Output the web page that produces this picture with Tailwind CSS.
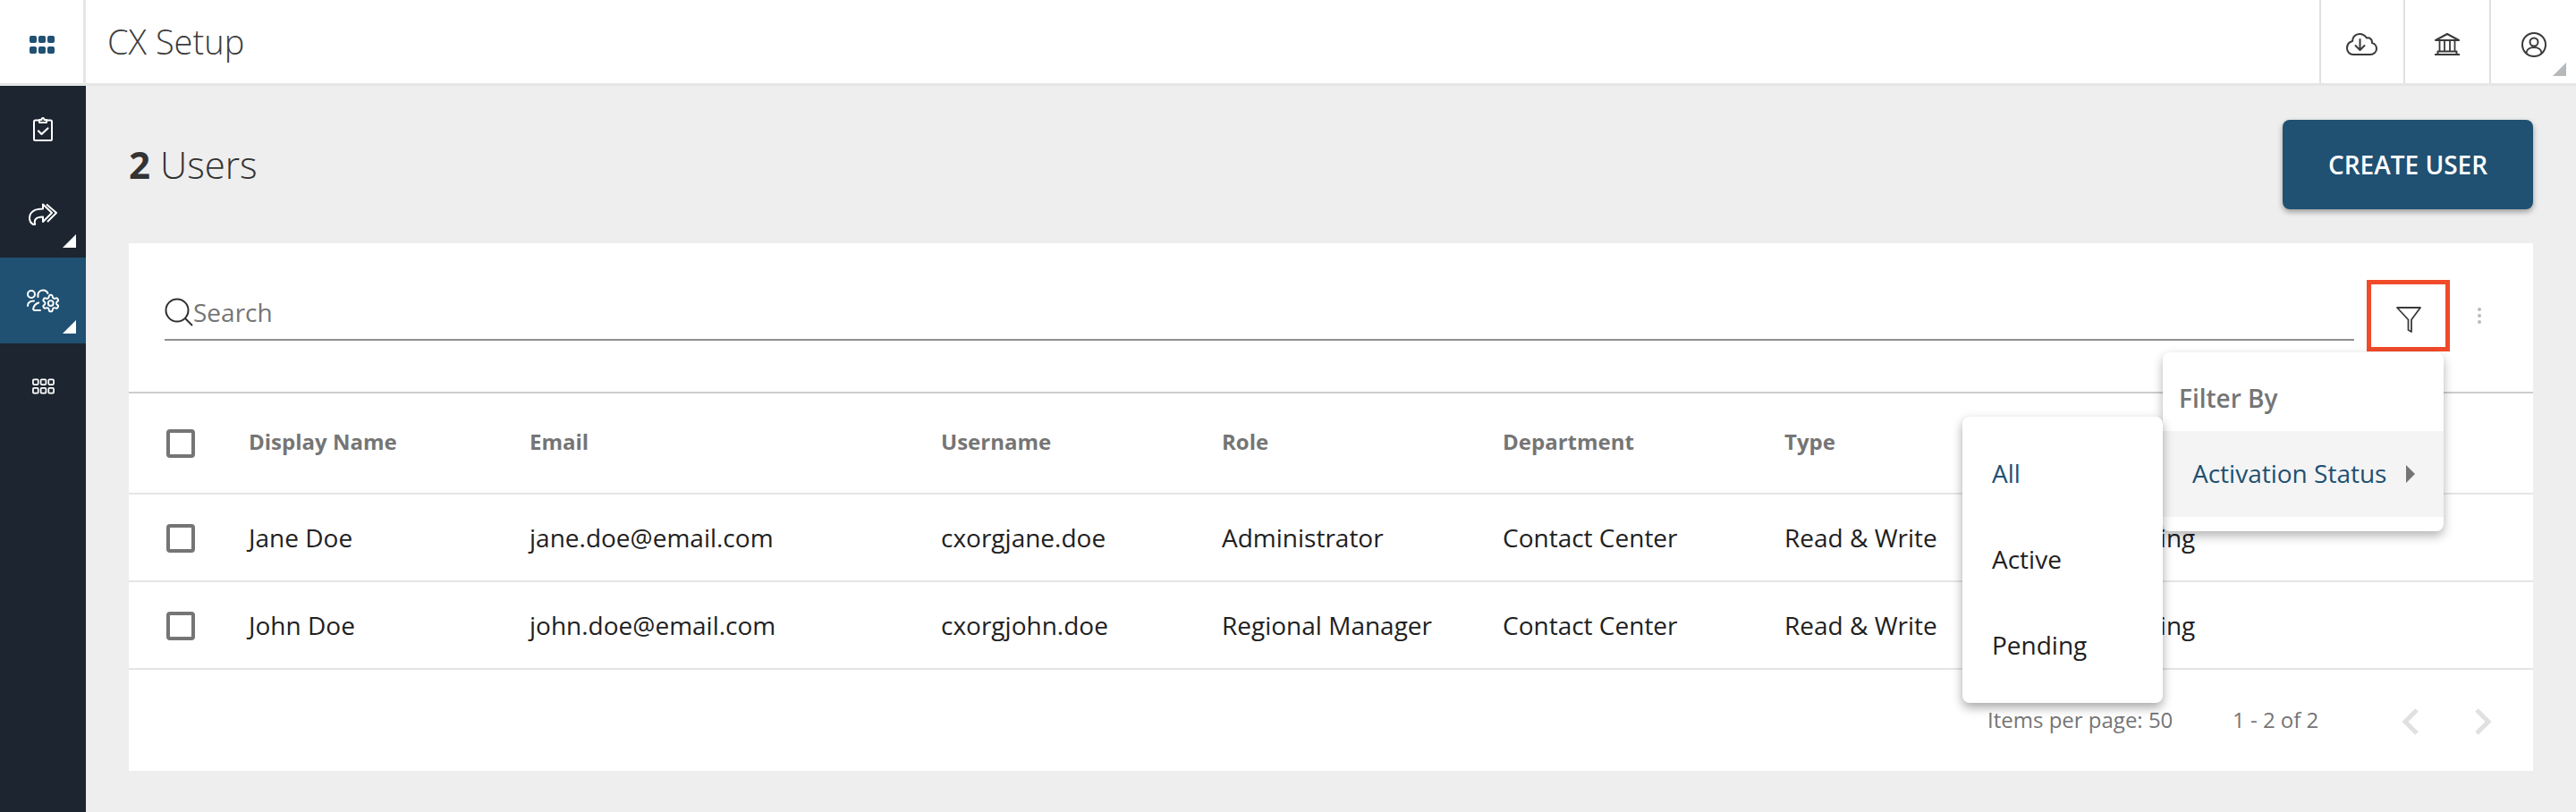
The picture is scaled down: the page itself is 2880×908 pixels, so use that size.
<!DOCTYPE html>
<html lang="en">
<head>
    <meta charset="UTF-8">
    <title>CX Setup</title>
    <script src="https://cdn.jsdelivr.net/npm/@tailwindcss/browser@4"></script>
</head>
<body class="h-[908px] w-[2880px] overflow-hidden bg-[#eeeeee] font-['Open_Sans',sans-serif] text-[#212121]">

    <!-- Top bar -->
    <header class="flex h-[96px] border-b-[3px] border-[#e6e6e6] bg-white">
        <div class="flex w-[96px] items-center justify-center border-r-[3px] border-[#e6e6e6]">
            <svg class="mt-[6px]" width="28" height="20" viewBox="0 0 28 20" fill="#205072">
                <rect x="0" y="0" width="8" height="8" rx="2"/><rect x="10" y="0" width="8" height="8" rx="2"/><rect x="20" y="0" width="8" height="8" rx="2"/>
                <rect x="0" y="12" width="8" height="8" rx="2"/><rect x="10" y="12" width="8" height="8" rx="2"/><rect x="20" y="12" width="8" height="8" rx="2"/>
            </svg>
        </div>
        <h1 class="pl-[24px] text-[38px] leading-[93px] font-light text-[#3c3c3c]">CX Setup</h1>
        <div class="ml-auto flex">
            <div class="flex w-[94px] items-center justify-center border-l-2 border-[#e0e0e0]">
                <svg class="mt-[6px] mr-[2px]" width="35" height="25" viewBox="0 0 35 25" fill="none" stroke="#3a3a3a" stroke-width="2" stroke-linecap="round" stroke-linejoin="round">
                    <path d="M8 24H27C31 24 34 21 34 17.500C34 14 31.500 11.500 29 11C29.500 7 26 4.500 23 5.500C21 2.500 18 1 15 1C10.500 1 7 4.500 7 9C3 10 1 13.500 1 17C1 21 4 24 8 24z"/>
                    <path d="M15.500 7V18.500M10.500 14l5 5 5-5"/>
                </svg>
            </div>
            <div class="flex w-[96px] items-center justify-center border-l-2 border-[#e0e0e0]">
                <svg class="mt-[6px]" width="28" height="25" viewBox="0 0 28 25" fill="none" stroke="#3a3a3a" stroke-width="2" stroke-linejoin="round">
                    <path d="M1 8 14 1l13 7z"/>
                    <path d="M5.500 9v11M11 9v11M17 9v11M22.500 9v11" stroke-width="1.800"/>
                    <path d="M3.500 24v-3.500h21V24"/>
                    <path d="M0 24h28"/>
                </svg>
            </div>
            <div class="relative flex w-[97px] items-center justify-center border-l-2 border-[#e0e0e0]">
                <svg class="mt-[6px]" width="28" height="28" viewBox="0 0 28 28" fill="none" stroke="#3a3a3a" stroke-width="2">
                    <circle cx="14" cy="14" r="13"/>
                    <circle cx="14" cy="11" r="4.500"/>
                    <path d="M5.500 23.500c0-4 3.500-6.500 8.500-6.500s8.500 2.500 8.500 6.500"/>
                </svg>
                <svg class="absolute right-[11px] bottom-[8px]" width="15" height="15" viewBox="0 0 15 15" fill="#b5b9bc"><path d="M15 0v15H0z"/></svg>
            </div>
        </div>
    </header>

    <div class="flex h-[812px]">
        <!-- Side nav -->
        <nav class="w-[96px] shrink-0 bg-[#1c2530]">
            <div class="flex h-[96px] items-center justify-center">
                <svg width="22" height="28" viewBox="0 0 22 28" fill="none" stroke="#fff" stroke-width="2" stroke-linecap="round" stroke-linejoin="round">
                    <path d="M7 4.500H2.500a1.500 1.500 0 0 0-1.500 1.500v19.500A1.500 1.500 0 0 0 2.500 27h17a1.500 1.500 0 0 0 1.500-1.500V6a1.500 1.500 0 0 0-1.500-1.500H15"/>
                    <path d="M7 7V4h2.500a1.500 2 0 0 1 3 0H15v3z"/>
                    <path d="M6 16.500l3.500 3.500 7-6.500" stroke-width="2.200"/>
                </svg>
            </div>
            <div class="relative flex h-[96px] items-center justify-center">
                <svg class="mb-[2px]" width="32" height="25" viewBox="0 0 32 25" fill="none" stroke="#fff" stroke-width="2" stroke-linejoin="round">
                    <path d="M16 1.500V6.500C7 6.500 1 10 1 17C1 20.500 3 23 6 24.500C6.500 24.500 7.500 24 7 23C6 19 8 15.500 16 15.500V21L26 11z"/>
                    <path d="M20 1.500 31 11 21 21"/>
                </svg>
                <svg class="absolute right-[11px] bottom-[11px]" width="15" height="15" viewBox="0 0 15 15" fill="#fff"><path d="M15 0v15H0z"/></svg>
            </div>
            <div class="relative flex h-[96px] items-center justify-center bg-[#205072]">
                <svg class="mt-[4px] ml-[2px]" width="40" height="30" viewBox="29 323 40 30" fill="none" stroke="#fff" stroke-width="2" stroke-linecap="round" stroke-linejoin="round">
                    <circle cx="35" cy="329" r="4"/>
                    <path d="M31 342c0-3.500 2.500-5.500 7-5.500"/>
                    <path d="M42.500 332c-1-4 1.500-7.500 5.500-7.500 2.500 0 4.500 1.200 5.500 3.500"/>
                    <path d="M45 347h-6c-1.500 0-2-1-1.800-2 .6-3 2.800-5.500 6-6.500"/>
                    <g transform="translate(45.700 328) scale(.92)">
                        <path d="M12.220 2h-.44a2 2 0 0 0-2 2v.18a2 2 0 0 1-1 1.730l-.43.25a2 2 0 0 1-2 0l-.15-.08a2 2 0 0 0-2.730.73l-.22.38a2 2 0 0 0 .73 2.730l.15.1a2 2 0 0 1 1 1.720v.51a2 2 0 0 1-1 1.740l-.15.09a2 2 0 0 0-.73 2.730l.22.38a2 2 0 0 0 2.730.73l.15-.08a2 2 0 0 1 2 0l.43.25a2 2 0 0 1 1 1.730V20a2 2 0 0 0 2 2h.44a2 2 0 0 0 2-2v-.18a2 2 0 0 1 1-1.730l.43-.25a2 2 0 0 1 2 0l.15.08a2 2 0 0 0 2.730-.73l.22-.39a2 2 0 0 0-.73-2.730l-.15-.08a2 2 0 0 1-1-1.740v-.5a2 2 0 0 1 1-1.740l.15-.09a2 2 0 0 0 .73-2.730l-.22-.38a2 2 0 0 0-2.730-.73l-.15.08a2 2 0 0 1-2 0l-.43-.25a2 2 0 0 1-1-1.730V4a2 2 0 0 0-2-2z" stroke-width="2.100"/>
                        <circle cx="12" cy="12" r="3.200" stroke-width="2.100"/>
                    </g>
                </svg>
                <svg class="absolute right-[11px] bottom-[11px]" width="15" height="15" viewBox="0 0 15 15" fill="#fff"><path d="M15 0v15H0z"/></svg>
            </div>
            <div class="flex h-[96px] items-center justify-center">
                <svg width="25" height="18" viewBox="0 0 26 18" fill="none" stroke="#fff" stroke-width="1.800">
                    <rect x="1" y="1" width="6" height="6" rx="1"/><rect x="10" y="1" width="6" height="6" rx="1"/><rect x="19" y="1" width="6" height="6" rx="1"/>
                    <rect x="1" y="11" width="6" height="6" rx="1"/><rect x="10" y="11" width="6" height="6" rx="1"/><rect x="19" y="11" width="6" height="6" rx="1"/>
                </svg>
            </div>
        </nav>

        <main class="flex-1 px-[48px]">
            <div class="flex h-[176px] items-start justify-between pt-[38px]">
                <h2 class="text-[42px] leading-[100px] font-light text-[#333333]"><span class="font-bold">2</span> Users</h2>
                <button class="h-[100px] w-[280px] rounded-lg bg-[#205072] text-[28px] font-semibold text-white shadow-[0_3px_6px_rgba(0,0,0,0.35)]">CREATE USER</button>
            </div>

            <section class="relative h-[590px] bg-white">
                <!-- Search + filter -->
                <div class="flex h-[166px] items-start pt-[41px] pl-[40px]">
                    <div class="mt-[20px] flex h-[48px] w-[2448px] items-start border-b-2 border-[#8f8f8f]">
                        <svg width="32" height="32" viewBox="0 0 32 32" fill="none" stroke="#2f2f2f" stroke-width="2"><circle cx="14" cy="14" r="12.500"/><path d="M23 23l8 8"/></svg>
                        <span class="text-[28px] leading-[32px] text-[#757575]">Search</span>
                    </div>
                    <div class="ml-[14px] flex h-[80px] w-[93px] items-center justify-center border-[5px] border-[#f04a2a]">
                        <svg class="mt-[8px]" width="30" height="30" viewBox="0 0 30 30" fill="none" stroke="#3a3a3a" stroke-width="1.800" stroke-linejoin="round"><path d="M2 2h26L18 15.500V29l-3.500-2V15.500z"/></svg>
                    </div>
                    <div class="ml-[30px] flex h-[80px] w-[6px] flex-col items-center justify-center gap-[3px]">
                        <i class="h-[4px] w-[4px] rounded-full bg-[#bbbbbb]"></i><i class="h-[4px] w-[4px] rounded-full bg-[#bbbbbb]"></i><i class="h-[4px] w-[4px] rounded-full bg-[#bbbbbb]"></i>
                    </div>
                </div>

                <!-- Table -->
                <div class="grid h-[115px] grid-cols-[134px_314px_460px_314px_314px_315px_353px_1fr] items-center border-y-2 border-t-[#cccccc] border-b-[#e5e5e5] pb-[3px] text-[24px] font-bold text-[#757575]">
                    <span class="mt-[3px] ml-[42px] h-[32px] w-[32px] rounded-[4px] border-4 border-[#757575]"></span>
                    <span>Display Name</span><span>Email</span><span>Username</span><span>Role</span><span>Department</span><span>Type</span><span>Activation Status</span>
                </div>
                <div class="grid h-[98px] grid-cols-[134px_314px_460px_314px_314px_315px_353px_1fr] items-center border-b-2 border-[#e5e5e5] text-[28px]">
                    <span class="mt-[2px] ml-[42px] h-[32px] w-[32px] rounded-[4px] border-4 border-[#757575]"></span>
                    <span>Jane Doe</span><span>jane.doe@email.com</span><span>cxorgjane.doe</span><span>Administrator</span><span>Contact Center</span><span>Read &amp; Write</span><span>Pending</span>
                </div>
                <div class="grid h-[98px] grid-cols-[134px_314px_460px_314px_314px_315px_353px_1fr] items-center border-b-2 border-[#e5e5e5] text-[28px]">
                    <span class="mt-[2px] ml-[42px] h-[32px] w-[32px] rounded-[4px] border-4 border-[#757575]"></span>
                    <span>John Doe</span><span>john.doe@email.com</span><span>cxorgjohn.doe</span><span>Regional Manager</span><span>Contact Center</span><span>Read &amp; Write</span><span>Pending</span>
                </div>

                <!-- Pagination -->
                <div class="flex h-[111px] items-center pl-[2078px] text-[24px] text-[#757575]">
                    <span class="w-[274px]">Items per page: 50</span>
                    <span class="w-[180px]">1 - 2 of 2</span>
                    <svg class="mt-[5px] ml-[9px]" width="20" height="30" viewBox="0 0 20 30" fill="none" stroke="#e0e0e0" stroke-width="5"><path d="M17 2 4 15l13 13"/></svg>
                    <svg class="mt-[5px] ml-[61px]" width="20" height="30" viewBox="0 0 20 30" fill="none" stroke="#e0e0e0" stroke-width="5"><path d="M3 2l13 13L3 28"/></svg>
                </div>

                <!-- Filter menus -->
                <div class="absolute top-[122px] left-[2274px] h-[200px] w-[314px] rounded-lg bg-white pt-[88px] shadow-[0_5px_12px_rgba(0,0,0,0.3)]">
                    <div class="absolute top-[30px] left-[18px] text-[28px] leading-[42px] font-semibold text-[#757575]">Filter By</div>
                    <div class="flex h-[96px] items-center bg-[#f4f4f4] pb-[2px] pl-[33px] text-[28px] text-[#205072]">
                        Activation Status
                        <svg class="mt-[2px] ml-[22px]" width="10" height="20" viewBox="0 0 10 20" fill="#757575"><path d="M0 0l10 10L0 20z"/></svg>
                    </div>
                </div>
                <div class="absolute top-[194px] left-[2050px] w-[224px] rounded-lg bg-white py-[16px] text-[28px] shadow-[0_5px_12px_rgba(0,0,0,0.35)]">
                    <div class="flex h-[96px] items-center pb-[2px] pl-[33px] text-[#205072]">All</div>
                    <div class="flex h-[96px] items-center pb-[2px] pl-[33px]">Active</div>
                    <div class="flex h-[96px] items-center pb-[2px] pl-[33px]">Pending</div>
                </div>
            </section>
        </main>
    </div>
</body>
</html>
